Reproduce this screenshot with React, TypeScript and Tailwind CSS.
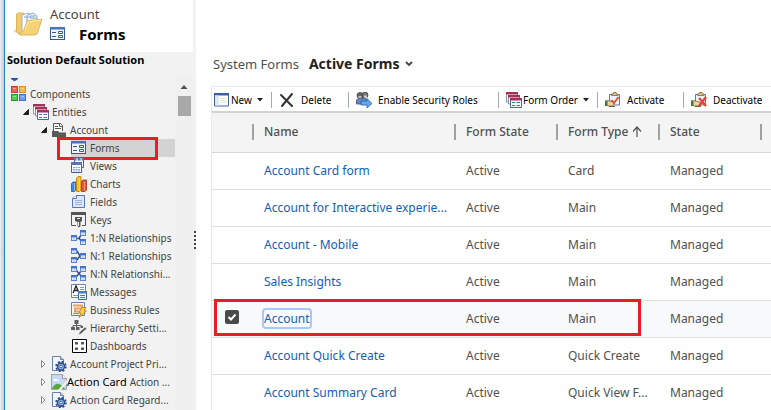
import type { ReactNode } from "react";

type IconName =
  | "components" | "entities" | "entity" | "form" | "views" | "charts" | "fields" | "keys"
  | "oneToMany" | "manyToOne" | "manyToMany" | "messages" | "rules" | "hierarchy"
  | "dashboards" | "custom" | "broken" | "newItem" | "remove" | "roles" | "activate" | "deactivate";

function Node({ x, y }: { x: number; y: number }) {
  return (
    <g>
      <rect x={x} y={y} width="5" height="5" fill="#f5f8ff" stroke="#5f83d0" />
      <path d={`M${x - 0.5} ${y - 0.5}h6v2.500h-6z`} fill="#4472ce" />
      <path d={`M${x + 1} ${y + 3.5}h3`} stroke="#9db5e5" />
    </g>
  );
}

function Clipboard() {
  return (
    <g>
      <path d="M4.500 2.500h10v10.500h-10z" fill="#eef3fb" stroke="#64779c" />
      <path d="M6.500 3.500V2h1.500L8.500.5h2.500l.5 1.500H13v1.500z" fill="#d9c17c" stroke="#80693b" strokeWidth=".8" />
      <path d="M.5 9.500l2-1 6 1.500 1 2-2 2H3.500L.5 13z" fill="#ecd39c" stroke="#7b6636" strokeWidth=".8" />
      <path d="M0 8.500h2.500V14H0z" fill="#3e7c3c" />
      <path d="M4 14.500h6" stroke="#6c6742" />
    </g>
  );
}

const drawings: Record<IconName, ReactNode> = {
  components: (
    <g strokeWidth="1">
      <rect x=".5" y=".5" width="6" height="6" fill="#ef625c" stroke="#cf3632" />
      <rect x="8.500" y=".5" width="6" height="6" fill="#f8ba45" stroke="#dd8e16" />
      <rect x=".5" y="8.500" width="6" height="6" fill="#55ce4d" stroke="#26962a" />
      <rect x="8.500" y="8.500" width="6" height="6" fill="#6e9df3" stroke="#3e6fd6" />
      <path d="M2 2.500h3M10 2.500h3M2 10.500h3M10 10.500h3" stroke="#fff" opacity=".4" />
    </g>
  ),
  entities: (
    <g>
      <path d="M.5 1v9h11V1z" fill="#fff" stroke="#8b91ab" />
      <path d="M0 0h12v2.500H0z" fill="#a23358" />
      <path d="M2.500 4v8h11V4z" fill="#fff" stroke="#8b91ab" />
      <path d="M2 3h12v2.500H2z" fill="#a23358" />
      <path d="M4.500 7v8.500h11V7z" fill="#f4f7ff" stroke="#526791" />
      <path d="M4 6h12v2.500H4z" fill="#a23358" />
      <path d="M6 10.500h3M6 13.500h3M10.500 10.500h3.500M10.500 13.500h3.500" stroke="#5270a8" />
    </g>
  ),
  entity: (
    <g>
      <path d="M2.500 9V1.500h7l2 2V9" fill="#fff" stroke="#555" />
      <path d="M4 4.500h3M4 6.500h6M8.500 1.500v3h3" fill="none" stroke="#555" />
      <path d="M1 9h6l1.500 1.500H15V15H1z" fill="#5a5a5a" />
    </g>
  ),
  form: (
    <g>
      <rect x=".5" y="1.500" width="14" height="12" fill="#eef4ff" stroke="#365795" />
      <path d="M0 1h15v2.500H0z" fill="#4772bd" />
      <path d="M2 6.500h4M2 10.500h4" stroke="#3f5b8e" />
      <path d="M8.500 5.500h4v2h-4zM8.500 9.500h4v2h-4z" fill="#fff" stroke="#3f5b8e" />
    </g>
  ),
  views: (
    <g>
      <path d="M3.500.5h9v9h-9z" fill="#fff" stroke="#465c94" />
      <path d="M3 0h10v2.500H3z" fill="#5577bd" />
      <path d="M6 0v3M10 0v3" stroke="#fff" />
      <path d="M.5 4.500h10v10H.5z" fill="#fff" stroke="#465c94" />
      <path d="M0 4h11v3H0z" fill="#5577bd" />
      <path d="M2 9.500h7M2 11.500h7M2 13h7" stroke="#8da5d2" strokeDasharray="2 .500" />
    </g>
  ),
  charts: (
    <g>
      <path d="M.5 7.500L2 6h3v8l-1.500 1.500h-3z" fill="#3f89e0" stroke="#1e5aa9" strokeWidth=".8" />
      <path d="M5.500 2L7 .5h3V14l-1.500 1.500h-3z" fill="#f8bf22" stroke="#b97b09" strokeWidth=".8" />
      <path d="M10.500 5.500L12 4h3.500v10L14 15.500h-3.500z" fill="#e85328" stroke="#a52c11" strokeWidth=".8" />
      <path d="M3.500 7v8M8.500 2v13M13.500 5.500V15" stroke="#fff" opacity=".4" />
    </g>
  ),
  fields: (
    <g>
      <path d="M1.500 4.500l4-3h8v12h-12z" fill="#dce7fb" stroke="#5977b4" />
      <path d="M1.500 4.500h4v-3" fill="#fff" stroke="#5977b4" />
      <path d="M4 6.500h7M4 8.500h7M4 10.500h7" stroke="#9fb3dc" />
    </g>
  ),
  keys: (
    <g>
      <path d="M.5 1h14v12.500H11M.5 1v12.500H5" fill="none" stroke="#555" />
      <path d="M0 0h15v3H0z" fill="#555" />
      <path d="M4 5h7v4l-1.500 1v4L8 15.500 6.500 14v-4L4 9z" fill="#555" />
      <path d="M7.500 10v4M6 6.500h3" stroke="#eee" />
    </g>
  ),
  oneToMany: (
    <g>
      <path d="M6 8.500h3M8 8l3-4M8 8l3 4" stroke="#354d82" strokeWidth="1.500" />
      <Node x={0.5} y={5.5} /><Node x={9.5} y={0.5} /><Node x={9.5} y={9.5} />
    </g>
  ),
  manyToOne: (
    <g>
      <path d="M6 3l3 5-3 4M8 8.500h2" fill="none" stroke="#354d82" strokeWidth="1.500" />
      <Node x={0.5} y={0.5} /><Node x={0.5} y={9.5} /><Node x={9.5} y={5.5} />
    </g>
  ),
  manyToMany: (
    <g>
      <path d="M5 4l6 7M11 4l-6 7" stroke="#354d82" strokeWidth="1.500" />
      <Node x={0.5} y={0.5} /><Node x={9.5} y={0.5} /><Node x={0.5} y={9.5} /><Node x={9.5} y={9.5} />
    </g>
  ),
  messages: (
    <g>
      <path d="M.5.5h14v13H.5z" fill="#fff" stroke="#7184ad" />
      <path d="M2 9l3-7 3 7M3 6.500h4" fill="none" stroke="#222" strokeWidth="1.300" />
      <path d="M9 3.500h4M9 5.500h4M2 11.500h5" stroke="#8193b8" />
      <path d="M7.500 7.500h8v8h-8z" fill="#eff5ff" stroke="#3d64b2" />
      <path d="M7 7h9v2.500H7z" fill="#4b79ce" />
      <path d="M9 11.500h5M9 13.500h5" stroke="#5576b7" />
    </g>
  ),
  rules: (
    <g>
      <path d="M.5.500h13v13H.5z" fill="#f4f7ff" stroke="#6a7fac" />
      <path d="M2 3.500h9v3H4v3h5" fill="none" stroke="#e9a056" strokeWidth="2" />
      <path d="M2 11.500h6" stroke="#7c90b8" />
      <path d="M11 5.500h4l-2 3.500h2.500L8 15.500l2-4.500H8z" fill="#ffd629" stroke="#9d721d" strokeWidth=".7" />
    </g>
  ),
  hierarchy: (
    <g fill="#606060">
      <path d="M3.500 0h4v4h-4zM0 7h4v3H0zM5 7h3.500v3H5zM9.500 6H12v2H9.500z" />
      <path d="M5.500 3v4M2 8V5.500h8.500V7" fill="none" stroke="#606060" />
      <path d="M7.500 15l1-3 5.500-5 2 1.500-5.500 5z" stroke="#f2f2f2" strokeWidth=".6" />
    </g>
  ),
  dashboards: (
    <g>
      <path d="M1.500 1.500h14v13h-14z" fill="#fff" stroke="#000" />
      <path d="M4 4h3v2.500H4zM10 4h3v2.500h-3zM4 9.500h3V12H4zM10 9.500h3V12h-3z" fill="#555" />
    </g>
  ),
  custom: (
    <g>
      <path d="M1.500.5h8l3 3v11h-11z" fill="#f1f5fe" stroke="#6980aa" />
      <path d="M9.500.5v3h3" fill="#cbd9f3" stroke="#6980aa" />
      <circle cx="10" cy="10.500" r="4.800" fill="none" stroke="#294b88" strokeWidth="1.800" strokeDasharray="2 1.770" />
      <circle cx="10" cy="10.500" r="3.500" fill="#8dacdf" stroke="#294b88" strokeWidth="1.300" />
      <circle cx="10" cy="10.500" r="1.300" fill="#fff" stroke="#294b88" strokeWidth=".8" />
    </g>
  ),
  broken: (
    <g>
      <path d="M.5.5h11l4 4v11H.5z" fill="#c5daf5" stroke="#a3a3a3" />
      <path d="M11.500.5v4h4" fill="#fff" stroke="#999" />
      <path d="M2 7c0-2 2-3 3-1.500C7 5 8 6 8 7z" fill="#fff" />
      <path d="M1 15c1-4 5-6 7-5 3 1 5 3 6 5z" fill="#55ab39" />
      <path d="M7 16l9-10v3l-6 7z" fill="#f2f2f2" />
    </g>
  ),
  newItem: (
    <g>
      <path d="M.5 2h14v12H.5z" fill="#fff" stroke="#45639b" />
      <path d="M0 1h15v2.500H0z" fill="#3d5f9f" />
      <path d="M1 3.500h4V13.500H1z" fill="#dce7f9" />
      <path d="M6 6.500h7M6 8.500h7M6 10.500h7" stroke="#eceadf" />
    </g>
  ),
  remove: <path d="M2 3l11 11M13 2L3 14" stroke="#333" strokeWidth="2" strokeLinecap="round" />,
  roles: (
    <g>
      <circle cx="4" cy="3.500" r="3" fill="#666" stroke="#333" strokeWidth=".7" />
      <circle cx="9" cy="3" r="3" fill="#777" stroke="#333" strokeWidth=".7" />
      <path d="M2.500 4h3v2h-3zM8 3.500h3V6H8z" fill="#c5c5c5" />
      <path d="M.5 12V8c2-2 8-3 11 0v4z" fill="#6d87b9" stroke="#354d84" strokeWidth=".8" />
      <path d="M5 9h6V6.500l5 5-5 4.500v-3H5z" fill="#62a5f1" stroke="#2361af" strokeWidth=".8" />
    </g>
  ),
  activate: (
    <g>
      <Clipboard />
      <path d="M6.500 8l2.500 3L13.500 5" fill="none" stroke="#e14c31" strokeWidth="1.800" />
    </g>
  ),
  deactivate: (
    <g>
      <Clipboard />
      <path d="M8 6l7 8M15 5l-7 9" stroke="#e4442e" strokeWidth="2.300" />
    </g>
  ),
};

function Icon({ name }: { name: IconName }) {
  return <svg className="size-4 shrink-0" viewBox="0 0 16 16" aria-hidden="true">{drawings[name]}</svg>;
}

function Folder() {
  return (
    <svg className="h-8 w-8 shrink-0" viewBox="0 0 32 32" aria-hidden="true">
      <path d="M0 24l5-6 4 8z" fill="#ddd" />
      <path d="M3.500 6l2-1h5l1 2 11 1v18H6l-2.500-2z" fill="#efcb70" stroke="#dcb35b" />
      <path d="M9 7l6-2 4 2v17H9z" fill="#f9fbfe" stroke="#a4b5cc" />
      <path d="M14 7l6-2 4 3v16H14z" fill="#eaf1f9" stroke="#94a8c4" />
      <path d="M11 9h7M17 8h5M17 10h6" stroke="#86a8d4" />
      <path d="M6 26l5-4 3-9 15-2-5 15-3 1H8z" fill="#f5d274" stroke="#e0b455" />
      <path d="M12 22l3-8 13-2" fill="none" stroke="#fff0b6" />
    </svg>
  );
}

function Twisty({ open }: { open: boolean }) {
  return (
    <svg className="size-2 shrink-0" viewBox="0 0 8 8" aria-hidden="true">
      {open ? <path d="M6.500 1.500v5h-5z" fill="#222" stroke="#222" /> : <path d="M1.500.500L5 4 1.500 7.500z" fill="#fff" stroke="#888" />}
    </svg>
  );
}

const entityParts: [IconName, string][] = [
  ["form", "Forms"],
  ["views", "Views"],
  ["charts", "Charts"],
  ["fields", "Fields"],
  ["keys", "Keys"],
  ["oneToMany", "1:N Relationships"],
  ["manyToOne", "N:1 Relationships"],
  ["manyToMany", "N:N Relationshi..."],
  ["messages", "Messages"],
  ["rules", "Business Rules"],
  ["hierarchy", "Hierarchy Setti..."],
  ["dashboards", "Dashboards"],
];

const rows = [
  ["Account Card form", "Card"],
  ["Account for Interactive experie...", "Main"],
  ["Account - Mobile", "Main"],
  ["Sales Insights", "Main"],
  ["Account", "Main"],
  ["Account Quick Create", "Quick Create"],
  ["Account Summary Card", "Quick View F..."],
];

const treeRow = "flex h-[18px] items-center gap-[3px] whitespace-nowrap";

function Sidebar() {
  return (
    <aside className="flex w-[192px] shrink-0 flex-col border-l border-[#1883d7] bg-[#f2f2f2]">
      <header className="mr-[3px] flex h-[52px] shrink-0 gap-1 bg-white pt-2 pl-2">
        <Folder />
        <div className="flex flex-col pl-px">
          <span className="text-[13px] leading-3 text-[#444]">Account</span>
          <h1 className="mt-1 flex items-center gap-[13px] text-[15px] leading-5 font-bold text-black">
            <Icon name="form" />
            Forms
          </h1>
        </div>
      </header>
      <h2 className="h-[26px] shrink-0 pl-[2px] text-[11px] leading-4 font-bold whitespace-nowrap text-black">Solution Default Solution</h2>
      <div className="flex min-h-0 flex-1">
        <nav className="min-w-0 flex-1 overflow-hidden text-[10px] text-[#444]" aria-label="Solution components">
          <svg className="ml-[6px] h-[7px] w-2" viewBox="0 0 8 7" aria-hidden="true"><path d="M0 0h7v1L4 3H3L0 1z" fill="#2c4fb0" /></svg>
          <ul>
            <li>
              <a href="#components" className={`${treeRow} pl-[6px]`}><Icon name="components" />Components</a>
              <ul>
                <li>
                  <a href="#entities" className={`${treeRow} pl-[17px]`}><Twisty open /><Icon name="entities" />Entities</a>
                  <ul>
                    <li>
                      <a href="#account" className={`${treeRow} pl-[35px]`}><Twisty open /><Icon name="entity" />Account</a>
                      <ul>
                        {entityParts.map(([icon, label], i) => (
                          <li key={label} className="relative pl-[66px]">
                            <a href={`#${icon}`} className={i === 0 ? "flex h-[18px] items-center gap-[3px] bg-[#d3d3d3] whitespace-nowrap" : treeRow}>
                              <Icon name={icon} />{label}
                            </a>
                            {i === 0 && <span className="pointer-events-none absolute -top-[2px] left-[52px] h-[23px] w-[101px] border-3 border-[#ed1c24]" />}
                          </li>
                        ))}
                      </ul>
                    </li>
                    <li><a href="#project" className={`${treeRow} pl-[35px]`}><Twisty open={false} /><Icon name="custom" />Account Project Pri...</a></li>
                    <li>
                      <a href="#action-card" className={`${treeRow} pl-[35px]`}>
                        <Twisty open={false} />
                        <span className="flex items-center"><Icon name="broken" /><span className="text-[11px] text-black">Action Card</span></span>
                        Action ...
                      </a>
                    </li>
                    <li><a href="#regarding" className={`${treeRow} pl-[35px]`}><Twisty open={false} /><Icon name="custom" />Action Card Regard...</a></li>
                  </ul>
                </li>
              </ul>
            </li>
          </ul>
        </nav>
        <div className="mr-[3px] flex w-[18px] shrink-0 flex-col items-center bg-[#f0f0f0]">
          <svg className="h-[18px] w-2" viewBox="0 0 8 18" aria-hidden="true"><path d="M4 7l3.500 4h-7z" fill="#505050" /></svg>
          <div className="h-5 w-[13px] bg-[#a8a8a8]" />
        </div>
      </div>
    </aside>
  );
}

function Tool({ icon, label, width, menu = false, last = false }: { icon: IconName; label: string; width: string; menu?: boolean; last?: boolean }) {
  return (
    <div className={`flex h-full shrink-0 items-center justify-between ${width}`}>
      <button type="button" className={`flex items-center whitespace-nowrap ${menu ? "gap-px" : "gap-[6px]"}`}>
        <Icon name={icon} />
        {label}
        {menu && <svg className="ml-1 h-1 w-[6px]" viewBox="0 0 6 4" aria-hidden="true"><path d="M0 0h6L3 3.500z" fill="#222" /></svg>}
      </button>
      {!last && <span className="mr-[7px] h-4 w-px bg-[#a5abb5]" />}
    </div>
  );
}

function Heading({ children }: { children?: ReactNode }) {
  return (
    <th scope="col" className="p-0 text-left font-medium">
      <span className="flex h-4 items-center gap-1 border-l-2 border-[#a0a0a0] pl-[10px] whitespace-nowrap">{children}</span>
    </th>
  );
}

function FormsGrid() {
  return (
    <section className="ml-[14px] min-w-0 flex-1 border-t border-l border-[#e8e8e8]">
      <div className="flex h-6 items-center overflow-hidden pt-[2px] pl-[2px] text-[10px] text-black" role="toolbar" aria-label="Form actions">
        <Tool icon="newItem" label="New" width="w-[65px]" menu />
        <Tool icon="remove" label="Delete" width="w-[77px]" />
        <Tool icon="roles" label="Enable Security Roles" width="w-[150px]" />
        <Tool icon="entities" label="Form Order" width="w-[99px]" menu />
        <Tool icon="activate" label="Activate" width="w-[86px]" />
        <Tool icon="deactivate" label="Deactivate" width="w-[80px]" last />
      </div>
      <table className="w-full table-fixed border-collapse text-xs text-[#505050]">
        <colgroup>
          <col className="w-10" />
          <col className="w-[202px]" />
          <col className="w-[102px]" />
          <col className="w-[102px]" />
          <col className="w-[102px]" />
          <col />
        </colgroup>
        <thead>
          <tr className="h-10 border-t-2 border-b border-t-[#d0d3d2] border-b-[#d6d6d6] bg-[#f4f4f4]">
            <td aria-hidden="true" />
            <Heading>Name</Heading>
            <Heading>Form State</Heading>
            <Heading>
              Form Type
              <svg className="h-3 w-[10px]" viewBox="0 0 10 12" aria-hidden="true"><path d="M5 11V1M1 5.500L5 1l4 4.500" fill="none" stroke="#505050" strokeWidth="1.200" /></svg>
            </Heading>
            <Heading>State</Heading>
            <Heading />
          </tr>
        </thead>
        <tbody>
          {rows.map(([name, type]) => {
            const selected = name === "Account";
            return (
              <tr key={name} className={selected ? "h-[37px] border-b border-[#dedede] bg-[#f8f9fb]" : "h-[37px] border-b border-[#dedede]"}>
                <td className="relative p-0 pl-[13px]">
                  {selected && (
                    <>
                      <label className="mb-1 grid size-[14px]">
                        <input type="checkbox" defaultChecked aria-label="Select Account" className="col-start-1 row-start-1 size-[14px] appearance-none rounded-xs bg-[#4a4a4a]" />
                        <svg className="pointer-events-none col-start-1 row-start-1 size-[14px]" viewBox="0 0 14 14" aria-hidden="true"><path d="M3.500 7l2.500 2.500 4.500-5" fill="none" stroke="#fff" strokeWidth="2" /></svg>
                      </label>
                      <span className="pointer-events-none absolute -top-[2px] left-[2px] h-[37px] w-[427px] border-3 border-[#ed1c24]" />
                    </>
                  )}
                </td>
                <td className="p-0 pl-3 whitespace-nowrap">
                  <a href="#form" className={selected ? "rounded-xs text-[#1160b7] outline-2 outline-[#a8c7fa]" : "text-[#1160b7]"}>{name}</a>
                </td>
                <td className="p-0 pl-3">Active</td>
                <td className="p-0 pl-3 whitespace-nowrap">{type}</td>
                <td className="p-0 pl-3">Managed</td>
                <td />
              </tr>
            );
          })}
        </tbody>
      </table>
    </section>
  );
}

export default function App() {
  return (
    <div className="flex h-screen overflow-hidden bg-white font-['Noto_Sans',sans-serif]">
      <div className="w-1 shrink-0 bg-linear-to-r from-[#eeeeee] to-[#c9c9c9]" />
      <Sidebar />
      <main className="flex min-w-0 flex-1 flex-col">
        <div className="flex h-[86px] shrink-0 items-end gap-[10px] pb-[12px] pl-[17px]">
          <span className="text-[13px] leading-5 text-[#505050]">System Forms</span>
          <button type="button" className="flex items-center gap-[6px] text-sm leading-5 font-bold text-[#222]">
            Active Forms
            <svg className="h-[6px] w-2" viewBox="0 0 8 6" aria-hidden="true"><path d="M1 1l3 3 3-3" fill="none" stroke="#444" strokeWidth="1.800" /></svg>
          </button>
        </div>
        <div className="flex min-h-0 flex-1">
          <svg className="mt-[145px] -ml-[2px] h-[18px] w-[3px] shrink-0" viewBox="0 0 3 18" role="separator">
            <path d="M0 0h2v2H0zM0 4h2v2H0zM0 8h2v2H0zM0 12h2v2H0zM0 16h2v2H0z" fill="#444" />
          </svg>
          <FormsGrid />
        </div>
      </main>
    </div>
  );
}
